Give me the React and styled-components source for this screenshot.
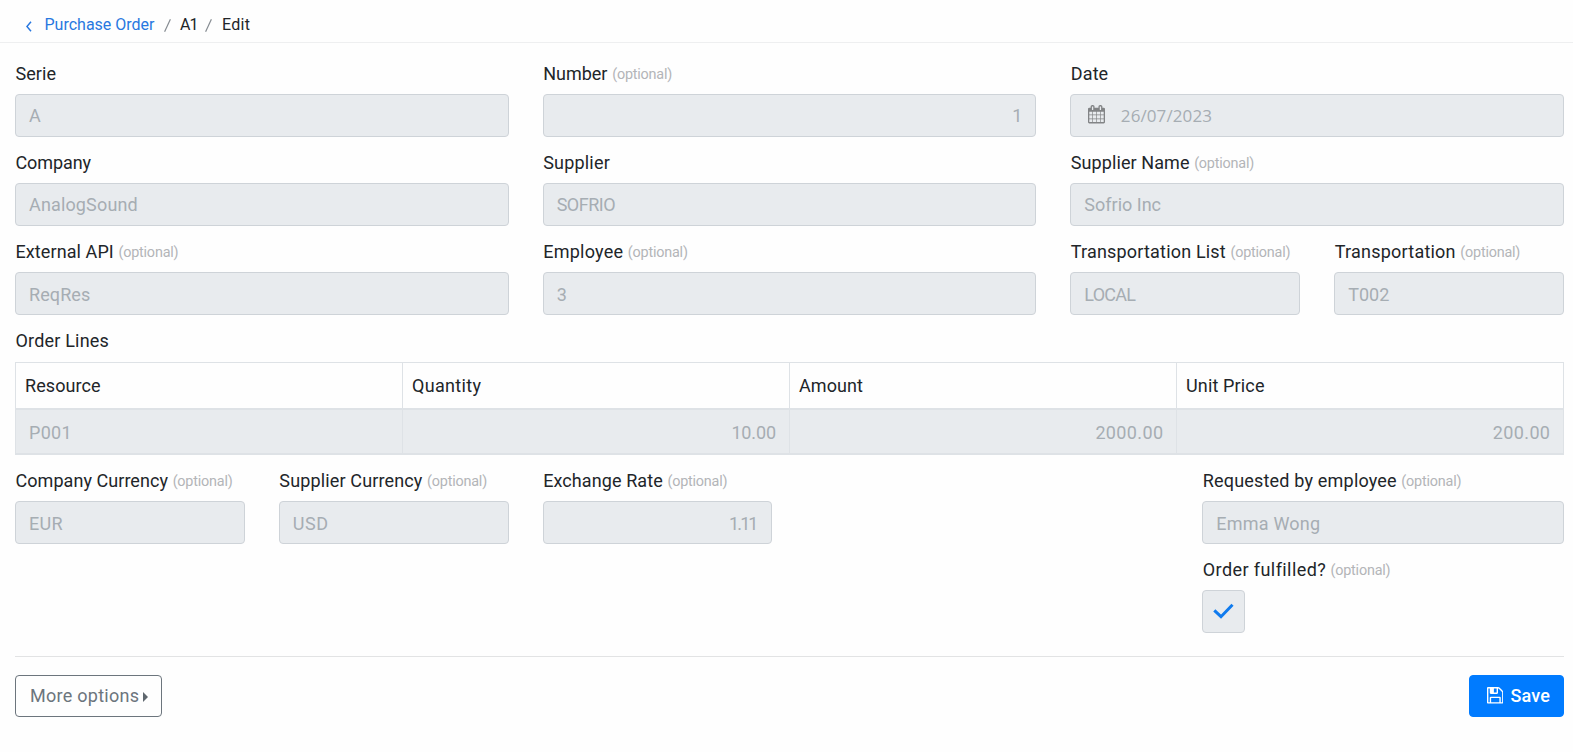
import React from "react";
import styled, { createGlobalStyle, css } from "styled-components";

const GlobalStyle = createGlobalStyle`
  *, *::before, *::after { box-sizing: border-box; }
  body {
    margin: 0;
    background: #fefefe;
    color: #212529;
    font-family: Roboto, "Liberation Sans", sans-serif;
    font-size: 18px;
    line-height: 27px;
  }
`;

const Text = styled.span`
  white-space: pre;
  letter-spacing: ${(p) => p.$track || 0}px;
  margin-right: ${(p) => -(p.$track || 0)}px;
`;

const Breadcrumb = styled.nav`
  display: flex;
  align-items: center;
  height: 43px;
  padding: 8px 0 0 26px;
  border-bottom: 1px solid #eeeff0;
  font-size: 16px;
  line-height: 24px;
`;

const BackIcon = styled.svg`
  width: 6px;
  height: 11px;
  margin: 3px 12.5px 0 0;
  fill: none;
  stroke: #2878e0;
  stroke-width: 1.5;
`;

const CrumbLink = styled.a`
  color: #2878e0;
  text-decoration: none;
  margin-right: 9px;
`;

const Slash = styled.svg`
  width: 7px;
  height: 13px;
  margin-right: 9.5px;
  fill: none;
  stroke: #868c92;
  stroke-width: 1.2;
`;

const Crumb = styled.span`
  margin-right: 7px;
`;

const Form = styled.form`
  padding: 17px 9px 0 15px;
`;

const FieldGrid = styled.div`
  display: grid;
  grid-template-columns: repeat(12, minmax(0, 1fr));
  column-gap: 34px;
  row-gap: 12px;
`;

const FieldBox = styled.div`
  grid-column: ${(p) => (p.$start ? `${p.$start} / span ${p.$span}` : `span ${p.$span}`)};
`;

const Label = styled.label`
  display: flex;
  align-items: baseline;
  height: 27px;
  padding-left: 0.5px;
  margin-bottom: 7px;
  white-space: nowrap;
`;

const Optional = styled.span`
  font-size: 14.4px;
  letter-spacing: -0.2px;
  color: #b3b5b8;
  margin-left: 4.7px;
  position: relative;
  top: -1px;
`;

const disabledSurface = css`
  background: #e8ebee;
  color: #a6adb3;
`;

const Input = styled.div`
  ${disabledSurface}
  display: flex;
  align-items: center;
  justify-content: ${(p) => (p.$right ? "flex-end" : "flex-start")};
  height: 43px;
  padding: ${(p) => (p.$raised ? "0 13px 1px" : "1px 13px 0")};
  border: 1px solid #ced3d8;
  border-radius: 4px;
`;

const DateText = styled(Text)`
  font-family: "Open Sans", "Noto Sans", sans-serif;
  font-size: 17px;
`;

const CalendarIcon = styled.svg`
  width: 17px;
  height: 18.5px;
  margin: -1px 15.5px 0 4px;
  fill: #828486;
`;

const CheckBox = styled(Input)`
  width: 43px;
  padding: 0;
  justify-content: center;
`;

const CheckIcon = styled.svg`
  width: 21px;
  height: 16px;
  margin-top: -2px;
  fill: none;
  stroke: #107bee;
  stroke-width: 3;
`;

const Table = styled.div`
  margin-top: 8px;
  border: 1px solid #dee2e6;
  border-bottom-width: 2px;
`;

const TableRow = styled.div`
  display: grid;
  grid-template-columns: 386px 387px 387px 1fr;
`;

const HeadRow = styled(TableRow)`
  height: 47px;
  border-bottom: 2px solid #dee2e6;
`;

const BodyRow = styled(TableRow)`
  ${disabledSurface}
  height: 43px;
`;

const Cell = styled.div`
  display: flex;
  align-items: center;
  justify-content: ${(p) => (p.$right ? "flex-end" : "flex-start")};
  padding: ${(p) => p.$pad};
  & + & { border-left: 1px solid #dee2e6; }
`;

const Footer = styled.footer`
  display: flex;
  justify-content: space-between;
  margin-top: 23px;
  padding-top: 18px;
  border-top: 1px solid #e2e3e4;
`;

const Button = styled.button`
  display: flex;
  align-items: center;
  height: 42px;
  padding: 0 13px 2px 14px;
  border: 1px solid ${(p) => (p.$primary ? "#007bff" : "#6c757d")};
  border-radius: 4px;
  background: ${(p) => (p.$primary ? "#007bff" : "#fefefe")};
  color: ${(p) => (p.$primary ? "#fff" : "#6c757d")};
  font: inherit;
  font-weight: ${(p) => (p.$primary ? 500 : 400)};
`;

const CaretIcon = styled.svg`
  width: 5px;
  height: 10px;
  margin: 4px 0 0 4px;
  fill: #5f676e;
`;

const SaveIcon = styled.svg`
  width: 16.5px;
  height: 16.5px;
  margin: 1px 7px 0 3px;
  fill: #fff;
`;

function Field({ label, track, optional, span, start, children }) {
  return (
    <FieldBox $span={span} $start={start}>
      <Label>
        <Text $track={track}>{label}</Text>
        {optional && <Optional>(optional)</Optional>}
      </Label>
      {children}
    </FieldBox>
  );
}

function Value({ track, right, raised, children }) {
  return (
    <Input $right={right} $raised={raised}>
      <Text $track={track}>{children}</Text>
    </Input>
  );
}

const headings = [["Resource", 0.07], ["Quantity", 0.33], ["Amount", 0.05], ["Unit Price", 0.15]];
const line = [["P001", 0.3], ["10.00", -0.15], ["2000.00", 0.36], ["200.00", 0.36]];

export default function App() {
  return (
    <>
      <GlobalStyle />
      <Breadcrumb>
        <BackIcon viewBox="0 0 6 11"><path d="M5 .7.9 5.5 5 10.3" /></BackIcon>
        <CrumbLink><Text>Purchase Order</Text></CrumbLink>
        <Slash viewBox="0 0 7 13"><path d="M6.4.3.6 12.7" /></Slash>
        <Crumb><Text $track={-1}>A1</Text></Crumb>
        <Slash viewBox="0 0 7 13"><path d="M6.4.3.6 12.7" /></Slash>
        <Text $track={0.35}>Edit</Text>
      </Breadcrumb>
      <Form>
        <FieldGrid>
          <Field label="Serie" track={0.05} span={4}><Value raised>A</Value></Field>
          <Field label="Number" optional span={4}><Value right raised>1</Value></Field>
          <Field label="Date" track={0.1} span={4}>
            <Input $raised>
              <CalendarIcon viewBox="0 -1536 1664 1792">
                <path transform="scale(1 -1)" d="M128 -128h288v288h-288v-288zM480 -128h320v288h-320v-288zM128 224h288v320h-288v-320zM480 224h320v320h-320v-320zM128 608h288v288h-288v-288zM864 -128h320v288h-320v-288zM480 608h320v288h-320v-288zM1248 -128h288v288h-288v-288zM864 224h320v320h-320v-320zM512 1088v288q0 13 -9.5 22.5t-22.5 9.5h-64q-13 0 -22.5 -9.5t-9.5 -22.5v-288q0 -13 9.5 -22.5t22.5 -9.5h64q13 0 22.5 9.5t9.5 22.5zM1248 224h288v320h-288v-320zM864 608h320v288h-320v-288zM1248 608h288v288h-288v-288zM1280 1088v288q0 13 -9.5 22.5t-22.5 9.5h-64q-13 0 -22.5 -9.5t-9.5 -22.5v-288q0 -13 9.5 -22.5t22.5 -9.5h64q13 0 22.5 9.5t9.5 22.5zM1664 1152v-1280q0 -52 -38 -90t-90 -38h-1408q-52 0 -90 38t-38 90v1280q0 52 38 90t90 38h128v96q0 66 47 113t113 47h64q66 0 113 -47t47 -113v-96h384v96q0 66 47 113t113 47h64q66 0 113 -47t47 -113v-96h128q52 0 90 -38t38 -90z" />
              </CalendarIcon>
              <DateText $track={0.1}>26/07/2023</DateText>
            </Input>
          </Field>

          <Field label="Company" track={-0.1} span={4}><Value raised track={0.15}>AnalogSound</Value></Field>
          <Field label="Supplier" track={0.2} span={4}><Value raised track={-0.5}>SOFRIO</Value></Field>
          <Field label="Supplier Name" track={0.08} optional span={4}><Value raised>Sofrio Inc</Value></Field>

          <Field label="External API" track={0.09} optional span={4}><Value track={0.1}>ReqRes</Value></Field>
          <Field label="Employee" track={0.26} optional span={4}><Value>3</Value></Field>
          <Field label="Transportation List" track={0.18} optional span={2}><Value track={-0.75}>LOCAL</Value></Field>
          <Field label="Transportation" track={0.23} optional span={2}><Value>T002</Value></Field>

          <Field label="Order Lines" track={0.19} span={12}>
            <Table>
              <HeadRow>
                {headings.map(([t, track]) => (
                  <Cell key={t} $pad="0 9px"><Text $track={track}>{t}</Text></Cell>
                ))}
              </HeadRow>
              <BodyRow>
                {line.map(([t, track], i) => (
                  <Cell key={t} $right={i > 0} $pad="1px 13px 0"><Text $track={track}>{t}</Text></Cell>
                ))}
              </BodyRow>
            </Table>
          </Field>

          <Field label="Company Currency" track={0.05} optional span={2}><Value track={0.3}>EUR</Value></Field>
          <Field label="Supplier Currency" track={0.14} optional span={2}><Value track={0.55}>USD</Value></Field>
          <Field label="Exchange Rate" track={0.09} optional span={2}><Value right track={-1.9}>1.11</Value></Field>
          <Field label="Requested by employee" track={0.19} optional start={10} span={3}><Value track={0.22}>Emma Wong</Value></Field>

          <Field label="Order fulfilled?" track={0.42} optional start={10} span={3}>
            <CheckBox>
              <CheckIcon viewBox="0 0 21 16"><path d="M1.3 7.3 8 13.7 19.5 1.8" /></CheckIcon>
            </CheckBox>
          </Field>
        </FieldGrid>

        <Footer>
          <Button type="button">
            <Text $track={0.27}>More options</Text>
            <CaretIcon viewBox="0 0 5 10"><path d="M0 0 5 5 0 10z" /></CaretIcon>
          </Button>
          <Button type="button" $primary>
            <SaveIcon viewBox="0 -1408 1536 1536">
              <path transform="scale(1 -1)" d="M384 0h768v384h-768v-384zM1280 0h128v896q0 14 -10 38.5t-20 34.5l-281 281q-10 10 -34 20t-39 10v-416q0 -40 -28 -68t-68 -28h-576q-40 0 -68 28t-28 68v416h-128v-1280h128v416q0 40 28 68t68 28h832q40 0 68 -28t28 -68v-416zM896 928v320q0 13 -9.5 22.5t-22.5 9.5h-192q-13 0 -22.5 -9.5t-9.5 -22.5v-320q0 -13 9.5 -22.5t22.5 -9.5h192q13 0 22.5 9.5t9.5 22.5zM1536 896v-928q0 -40 -28 -68t-68 -28h-1344q-40 0 -68 28t-28 68v1344q0 40 28 68t68 28h928q40 0 88 -20t76 -48l280 -280q28 -28 48 -76t20 -88z" />
            </SaveIcon>
            <Text $track={0.2}>Save</Text>
          </Button>
        </Footer>
      </Form>
    </>
  );
}
